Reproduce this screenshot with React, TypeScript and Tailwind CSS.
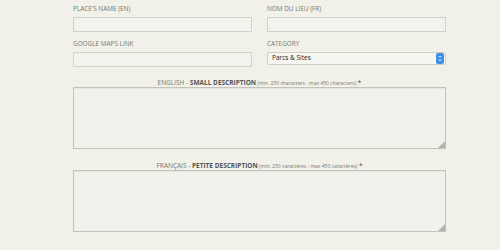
import React from 'react';

const font = { fontFamily: '"Open Sans", "Liberation Sans", sans-serif' };

function Field({ label, children }: { label: string; children: React.ReactNode }) {
  return (
    <div className="flex flex-col w-[179px]">
      <label className="text-[6.4px] leading-[8px] uppercase text-[#76766f] h-[8px] mb-[4px]">{label}</label>
      {children}
    </div>
  );
}

function TextInput() {
  return <input className="h-[15px] w-full border border-[#d2d2cb] bg-[#f3f3ed] outline-none" />;
}

function CategorySelect() {
  return (
    <div className="h-[13px] w-full border border-[#cfcfc8] rounded-[2px] bg-[#f6f6f1] flex items-center justify-between">
      <span className="text-[6.5px] leading-none text-[#222] pl-[4px]">Parcs &amp; Sites</span>
      <span className="h-[11px] w-[8px] mr-[1px] rounded-[2px] bg-[#3d8ee6] flex items-center justify-center">
        <svg width="4" height="7" viewBox="0 0 4 7">
          <path d="M0.5 2.5 L2 1 L3.5 2.5 M0.5 4.5 L2 6 L3.5 4.5" stroke="#fff" strokeWidth="0.8" fill="none" />
        </svg>
      </span>
    </div>
  );
}

function Description({ lead, bold, hint }: { lead: string; bold: string; hint: string }) {
  return (
    <div className="flex flex-col">
      <div className="text-center h-[8px] leading-[8px] mb-[4px] text-[#76766f]">
        <span className="text-[6.5px] uppercase">{lead} - </span>
        <span className="text-[6.5px] uppercase font-bold text-[#555]">{bold}</span>
        <span className="text-[5px]"> {hint} </span>
        <span className="text-[7px] text-[#555]">*</span>
      </div>
      <div className="relative">
        <textarea className="block h-[62px] w-[373px] resize-none border border-[#c3c3bc] bg-[#f2f2ec] outline-none shadow-[inset_0_1px_1px_rgba(0,0,0,0.05)]" />
        <svg className="absolute right-[1px] bottom-[1px]" width="7" height="7" viewBox="0 0 7 7">
          <path d="M7 0 L7 7 L0 7 Z" fill="#b4b4ae" />
        </svg>
      </div>
    </div>
  );
}

export default function App() {
  return (
    <div className="w-[500px] h-[250px] bg-[#f1f1ea] overflow-hidden" style={font}>
      <div className="pl-[73px] pt-[5px] w-[446px] flex flex-col">
        <div className="flex gap-[15px]">
          <Field label="Place's name (EN)"><TextInput /></Field>
          <Field label="Nom du lieu (FR)"><TextInput /></Field>
        </div>
        <div className="flex gap-[15px] mt-[8px]">
          <Field label="Google maps link"><TextInput /></Field>
          <Field label="Category"><CategorySelect /></Field>
        </div>
        <div className="mt-[8px]">
          <Description lead="English" bold="Small description" hint="(min. 250 characters - max 450 characters)" />
        </div>
        <div className="mt-[9px]">
          <Description lead="Français" bold="Petite description" hint="(min. 250 caractères - max 450 caractères)" />
        </div>
      </div>
    </div>
  );
}
